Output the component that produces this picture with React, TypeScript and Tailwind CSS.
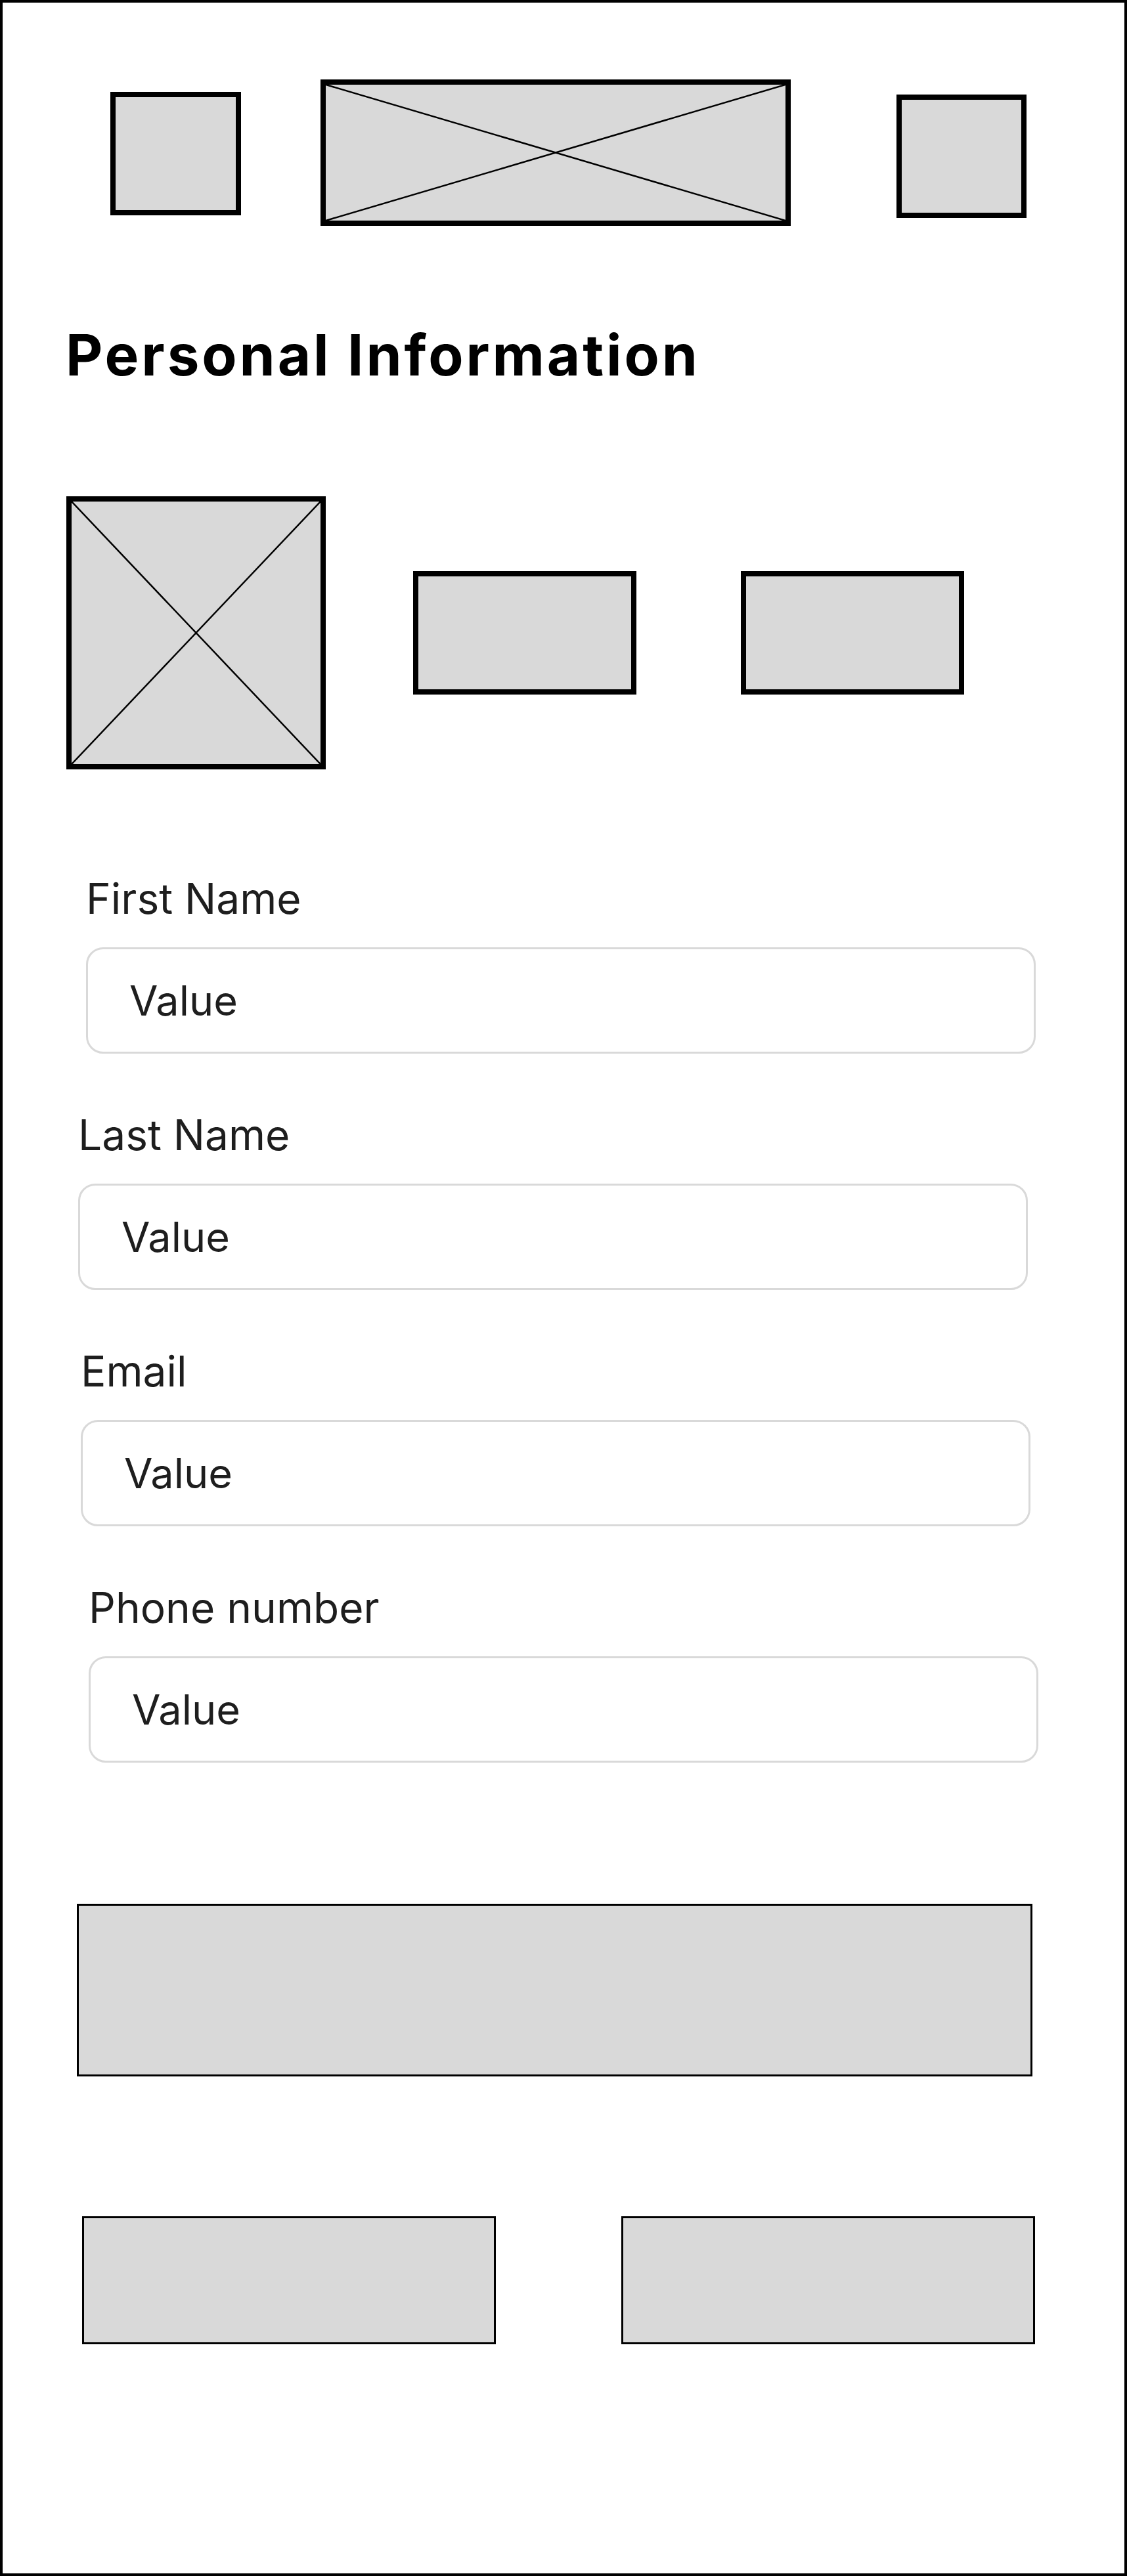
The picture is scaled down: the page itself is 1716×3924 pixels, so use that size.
const fields = [
  { label: 'First Name', offset: 'ml-[127px]' },
  { label: 'Last Name', offset: 'ml-[115px]' },
  { label: 'Email', offset: 'ml-[119px]' },
  { label: 'Phone number', offset: 'ml-[131px]' },
];

function CrossBox({ className }: { className: string }) {
  return (
    <div className={`relative shrink-0 bg-[#d9d9d9] border-[8px] border-black ${className}`}>
      {/* placeholder cross */}
      <svg className="absolute inset-0 w-full h-full" viewBox="0 0 100 100" preserveAspectRatio="none">
        <line x1="0" y1="0" x2="100" y2="100" stroke="#000" strokeWidth="2.5" vectorEffect="non-scaling-stroke" />
        <line x1="100" y1="0" x2="0" y2="100" stroke="#000" strokeWidth="2.5" vectorEffect="non-scaling-stroke" />
      </svg>
    </div>
  );
}

function Field({ label, offset }: { label: string; offset: string }) {
  return (
    <div className={`w-[1446px] flex flex-col ${offset}`}>
      <label className="text-[64px] leading-none text-[#1e1e1e]">{label}</label>
      <div className="mt-[42px] h-[162px] flex items-center pl-[63px] border-[3px] border-[#d9d9d9] rounded-[26px] bg-white">
        <span className="text-[63px] leading-none text-[#1e1e1e]">Value</span>
      </div>
    </div>
  );
}

export default function App() {
  return (
    <div
      className="w-[1716px] h-[3924px] border-4 border-black bg-white flex flex-col"
      style={{ fontFamily: 'Inter, "Noto Sans", sans-serif' }}
    >
      {/* Header */}
      <div className="mt-[117px] flex items-start">
        <div className="ml-[164px] mt-[19px] w-[199px] h-[188px] bg-[#d9d9d9] border-[8px] border-black shrink-0" />
        <CrossBox className="ml-[121px] w-[716px] h-[223px]" />
        <div className="ml-[161px] mt-[23px] w-[198px] h-[188px] bg-[#d9d9d9] border-[8px] border-black shrink-0" />
      </div>

      <h1 className="mt-[153px] ml-[96px] text-[87px] leading-none font-bold tracking-[0.045em] text-black">
        Personal Information
      </h1>

      {/* Avatar + actions */}
      <div className="mt-[172px] flex items-center">
        <CrossBox className="ml-[97px] w-[395px] h-[416px]" />
        <div className="ml-[133px] w-[340px] h-[188px] bg-[#d9d9d9] border-[8px] border-black shrink-0" />
        <div className="ml-[159px] w-[340px] h-[188px] bg-[#d9d9d9] border-[8px] border-black shrink-0" />
      </div>

      {/* Form */}
      <div className="mt-[165px] flex flex-col gap-[92px]">
        {fields.map((f) => (
          <Field key={f.label} label={f.label} offset={f.offset} />
        ))}
      </div>

      <div className="mt-[215px] ml-[113px] w-[1455px] h-[263px] bg-[#d9d9d9] border-[3px] border-black" />

      <div className="mt-[213px] flex">
        <div className="ml-[121px] w-[630px] h-[195px] bg-[#d9d9d9] border-[3px] border-black" />
        <div className="ml-[191px] w-[630px] h-[195px] bg-[#d9d9d9] border-[3px] border-black" />
      </div>
    </div>
  );
}
